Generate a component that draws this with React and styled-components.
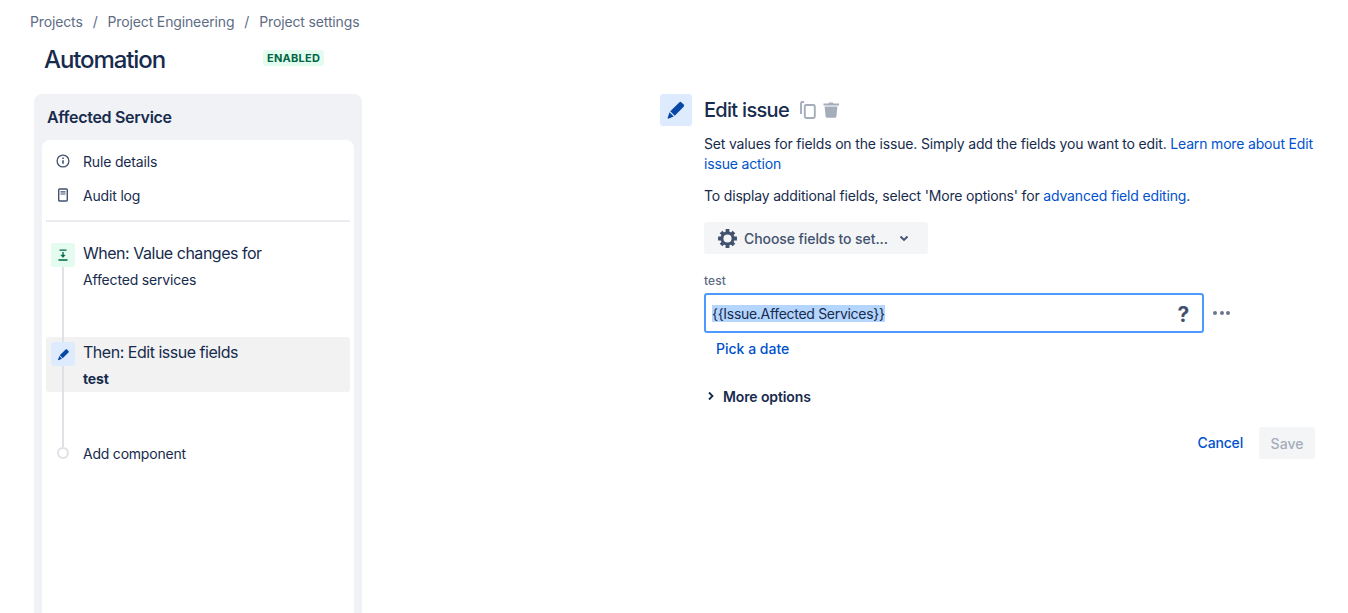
import React from 'react';
import styled, { createGlobalStyle } from 'styled-components';

const GlobalStyle = createGlobalStyle`
    html,body{margin:0;padding:0;height:100%;background:#fff;overflow:hidden;}
    body{font-family:Inter,"Liberation Sans",sans-serif;color:#172B4D;font-size:14px;letter-spacing:-0.17px;}
    *{box-sizing:border-box;}
`;

const Page = styled.div`
    width:1348px;height:613px;overflow:hidden;display:flex;flex-direction:column;
`;
const Crumbs = styled.div`
    display:flex;align-items:center;column-gap:10px;height:20px;margin:12px 0 0 30px;color:#5E6C84;font-size:14px;line-height:20px;letter-spacing:-0.14px;
`;
const Header = styled.div`
    display:flex;align-items:center;height:36px;margin:9px 0 0 44px;
`;
const Title = styled.h1`
    margin:1px 0 0;width:219px;font-size:24px;font-weight:500;line-height:36px;color:#172B4D;letter-spacing:-1.1px;
`;
const Badge = styled.span`
    display:block;margin-top:-3px;height:16px;padding:0 4px;border-radius:3px;background:#E3FCEF;color:#006644;font-size:11px;font-weight:700;line-height:16px;letter-spacing:0.25px;
`;
const Columns = styled.div`
    display:flex;flex:1;margin-top:17px;padding-left:34px;
`;
const Sidebar = styled.aside`
    width:328px;height:540px;flex:none;background:#F1F2F6;border-radius:8px;padding:0 8px;
`;
const SidebarTitle = styled.h2`
    margin:0;height:46px;padding-left:5px;font-size:16px;font-weight:600;line-height:46px;color:#172B4D;letter-spacing:-0.3px;
`;
const SidebarCard = styled.div`
    background:#fff;border-radius:8px 8px 0 0;height:494px;padding:4px 4px 0;
`;
const NavRow = styled.div`
    display:flex;align-items:center;height:34px;padding-left:9px;column-gap:12px;font-size:14px;color:#172B4D;
`;
const NavIcon = styled.span`
    width:16px;height:16px;display:flex;align-items:center;justify-content:center;color:#42526E;
`;
const Divider = styled.div`
    height:2px;margin-top:8px;background:#EBECF0;
`;
const Steps = styled.div`
    display:flex;flex-direction:column;margin-top:21px;
`;
const Step = styled.div`
    position:relative;display:flex;column-gap:8px;height:${p => p.$height}px;padding:${p => p.$pad || 0}px 0 0 5px;border-radius:3px;background:${p => p.$active ? '#F2F2F3' : 'transparent'};
    &::before{content:'';position:absolute;left:16px;top:${p => p.$lineTop}px;width:2px;height:${p => p.$line}px;background:#DFE1E6;}
`;
const StepIcon = styled.span`
    position:relative;flex:none;width:24px;height:24px;border-radius:3px;display:flex;align-items:center;justify-content:center;background:${p => p.$bg};
`;
const StepText = styled.div`
    display:flex;flex-direction:column;row-gap:7px;
`;
const StepTitle = styled.div`
    font-size:16px;line-height:20px;color:#172B4D;letter-spacing:-0.48px;
`;
const StepSub = styled.div`
    font-size:14px;line-height:20px;font-weight:${p => p.$bold ? 700 : 400};color:#172B4D;
`;
const AddRow = styled.div`
    display:flex;align-items:center;height:20px;margin-top:51px;padding-left:11px;column-gap:14px;font-size:14px;letter-spacing:-0.22px;
`;
const AddDot = styled.span`
    position:relative;width:12px;height:12px;border-radius:50%;border:2px solid #DFE1E6;background:#fff;
`;
const Panel = styled.section`
    margin-left:298px;width:656px;display:flex;column-gap:12px;
`;
const PanelIcon = styled.span`
    flex:none;width:32px;height:32px;border-radius:3px;background:#DEEBFF;display:flex;align-items:center;justify-content:center;
`;
const PanelBody = styled.div`
    width:611px;
`;
const PanelHead = styled.div`
    display:flex;align-items:center;height:32px;column-gap:11px;
`;
const PanelTitle = styled.h3`
    margin:0;font-size:20px;font-weight:500;line-height:32px;color:#172B4D;letter-spacing:-0.7px;
`;
const HeadIcons = styled.span`
    display:flex;align-items:center;column-gap:7px;
`;
const Para = styled.p`
    margin:${p => p.$top}px 0 0;font-size:14px;line-height:20px;color:#172B4D;
`;
const A = styled.a`
    color:#0052CC;text-decoration:none;
`;
const FieldsButton = styled.button`
    display:flex;align-items:center;width:224px;height:32px;margin-top:16px;padding:0 0 0 13px;border:0;border-radius:3px;background:#F4F5F7;color:#42526E;font:500 14px Inter,"Liberation Sans",sans-serif;letter-spacing:-0.08px;
`;
const GearIcon = styled.svg`
    margin-right:6px;
`;
const ChevronIcon = styled.svg`
    margin-left:11px;
`;
const FieldLabel = styled.label`
    display:block;margin-top:19px;font-size:12px;line-height:16px;color:#5E6C84;font-weight:500;letter-spacing:0.1px;
`;
const FieldRow = styled.div`
    display:flex;align-items:center;margin-top:4px;
`;
const FieldBox = styled.div`
    display:flex;align-items:center;justify-content:space-between;width:500px;height:40px;padding:0 12px 0 6px;border:2px solid #4C9AFF;border-radius:3px;background:#fff;
`;
const Selected = styled.span`
    background:#B4D5FE;font-size:14px;line-height:17px;color:#172B4D;letter-spacing:-0.3px;
`;
const Help = styled.span`
    font-size:21px;font-weight:700;color:#42526E;line-height:24px;margin:3px 1px 0 0;
`;
const Dots = styled.span`
    display:flex;column-gap:2.5px;margin-left:9px;
`;
const Dot = styled.i`
    width:4px;height:4px;border-radius:50%;background:#6B778C;
`;
const PickDate = styled(A)`
    display:block;margin:6px 0 0 12px;font-weight:500;font-size:14px;line-height:20px;letter-spacing:0;
`;
const MoreOptions = styled.div`
    display:flex;align-items:center;margin:27px 0 0 3px;height:20px;font-weight:600;font-size:14px;column-gap:8px;color:#172B4D;letter-spacing:-0.12px;
`;
const Actions = styled.div`
    display:flex;justify-content:flex-end;align-items:center;column-gap:16px;margin-top:21px;
`;
const CancelLink = styled(A)`
    font-weight:500;font-size:14px;margin-bottom:2px;
`;
const SaveButton = styled.button`
    width:56px;height:32px;border:0;border-radius:3px;background:#F4F5F7;color:#A5ADBA;font:500 14px Inter,"Liberation Sans",sans-serif;
`;

const Pencil = ({ size = 16, color = '#0747A6' }) => (
    <svg width={size} height={size} viewBox="0 0 16 16" fill={color}>
        <path d="M10.6 1.9a1.3 1.3 0 0 1 1.8 0l1.7 1.7a1.3 1.3 0 0 1 0 1.8L7 12.6 3.4 9z" />
        <path d="M2.8 9.8l3.4 3.4-3 1.2-1.4.6-.6-.6.5-1.3z" />
    </svg>
);

export default function App() {
    return (
        <Page>
            <GlobalStyle />
            <Crumbs>
                <span>Projects</span><span>/</span><span>Project Engineering</span><span>/</span><span>Project settings</span>
            </Crumbs>
            <Header>
                <Title>Automation</Title>
                <Badge>ENABLED</Badge>
            </Header>
            <Columns>
                <Sidebar>
                    <SidebarTitle>Affected Service</SidebarTitle>
                    <SidebarCard>
                        <NavRow>
                            <NavIcon>
                                <svg width="14" height="14" viewBox="0 0 14 14" fill="none" stroke="currentColor" strokeWidth="1.3">
                                    <circle cx="7" cy="7" r="5.9" />
                                    <path d="M7 6.2v3.6" strokeWidth="1.6" />
                                    <path d="M7 3.6v1.5" strokeWidth="1.6" />
                                </svg>
                            </NavIcon>
                            Rule details
                        </NavRow>
                        <NavRow>
                            <NavIcon>
                                <svg width="12" height="14" viewBox="0 0 12 14" fill="none" stroke="currentColor">
                                    <rect x="1.7" y="1" width="8.6" height="12" rx="1" strokeWidth="1.4" />
                                    <path d="M3.5 3.8h5M3.5 6h5" strokeWidth="1.2" />
                                </svg>
                            </NavIcon>
                            Audit log
                        </NavRow>
                        <Divider />
                        <Steps>
                            <Step $height={94} $lineTop={24} $line={70}>
                                <StepIcon $bg="#E3FCEF">
                                    <svg width="12" height="12" viewBox="0 0 12 12" fill="none" stroke="#006644" strokeWidth="1.3">
                                        <path d="M2.5 1.2h7M1.5 11h9" />
                                        <path d="M6 3v4.5" />
                                        <path d="M3.8 6h4.4L6 8.6z" fill="#006644" strokeWidth="0.4" />
                                    </svg>
                                </StepIcon>
                                <StepText>
                                    <StepTitle>When: Value changes for</StepTitle>
                                    <StepSub>Affected services</StepSub>
                                </StepText>
                            </Step>
                            <Step $height={55} $pad={5} $active $lineTop={0} $line={110}>
                                <StepIcon $bg="#DEEBFF"><Pencil size={13} /></StepIcon>
                                <StepText>
                                    <StepTitle>Then: Edit issue fields</StepTitle>
                                    <StepSub $bold>test</StepSub>
                                </StepText>
                            </Step>
                            <AddRow>
                                <AddDot />
                                Add component
                            </AddRow>
                        </Steps>
                    </SidebarCard>
                </Sidebar>
                <Panel>
                    <PanelIcon><Pencil size={20} /></PanelIcon>
                    <PanelBody>
                        <PanelHead>
                            <PanelTitle>Edit issue</PanelTitle>
                            <HeadIcons>
                                <svg width="16" height="18" viewBox="0 0 16 18" fill="none" stroke="#A5ADBA" strokeWidth="1.9">
                                    <path d="M4 1H2.4A1.4 1.4 0 0 0 1 2.4V13" />
                                    <rect x="4.8" y="4" width="10" height="13" rx="1.4" />
                                </svg>
                                <svg width="16" height="16" viewBox="0 0 16 16" fill="#A5ADBA">
                                    <path d="M.5 1.500h5l.7-1h3.600l.7 1h5.500v2H.5z" />
                                    <path d="M1.600 4.500h12.800l-1 10a1.500 1.500 0 0 1-1.500 1.300H4.100a1.500 1.500 0 0 1-1.500-1.300z" />
                                </svg>
                            </HeadIcons>
                        </PanelHead>
                        <Para $top={8}>Set values for fields on the issue. Simply add the fields you want to edit. <A href="#">Learn more about Edit issue action</A></Para>
                        <Para $top={12}>To display additional fields, select 'More options' for <A href="#">advanced field editing</A>.</Para>
                        <FieldsButton>
                            <GearIcon width="21" height="21" viewBox="0 0 20 20" fill="none">
                                <circle cx="10" cy="10" r="5.3" stroke="#42526E" strokeWidth="2.8" />
                                <path d="M8.200 1h3.600v3.500H8.200zM8.200 15.500h3.600V19H8.200zM1 8.200h3.500v3.600H1zM15.500 8.200H19v3.600h-3.500zM2.600 5.100 5.100 2.600l2.300 2.300-2.500 2.500zM12.600 15.100l2.500-2.500 2.300 2.300-2.500 2.500zM14.900 2.600l2.500 2.500-2.300 2.300-2.500-2.500zM4.900 12.600l2.500 2.500-2.300 2.300-2.500-2.500z" fill="#42526E" />
                            </GearIcon>
                            Choose fields to set...
                            <ChevronIcon width="10" height="10" viewBox="0 0 10 10" fill="none" stroke="#42526E" strokeWidth="1.800">
                                <path d="M1.500 3.500 5 7l3.500-3.500" />
                            </ChevronIcon>
                        </FieldsButton>
                        <FieldLabel>test</FieldLabel>
                        <FieldRow>
                            <FieldBox>
                                <Selected>{'{{Issue.Affected Services}}'}</Selected>
                                <Help>?</Help>
                            </FieldBox>
                            <Dots><Dot /><Dot /><Dot /></Dots>
                        </FieldRow>
                        <PickDate href="#">Pick a date</PickDate>
                        <MoreOptions>
                            <svg width="8" height="10" viewBox="0 0 8 10" fill="none" stroke="#172B4D" strokeWidth="1.800">
                                <path d="M2 1.500 5.500 5 2 8.500" />
                            </svg>
                            More options
                        </MoreOptions>
                        <Actions>
                            <CancelLink href="#">Cancel</CancelLink>
                            <SaveButton disabled>Save</SaveButton>
                        </Actions>
                    </PanelBody>
                </Panel>
            </Columns>
        </Page>
    );
}
